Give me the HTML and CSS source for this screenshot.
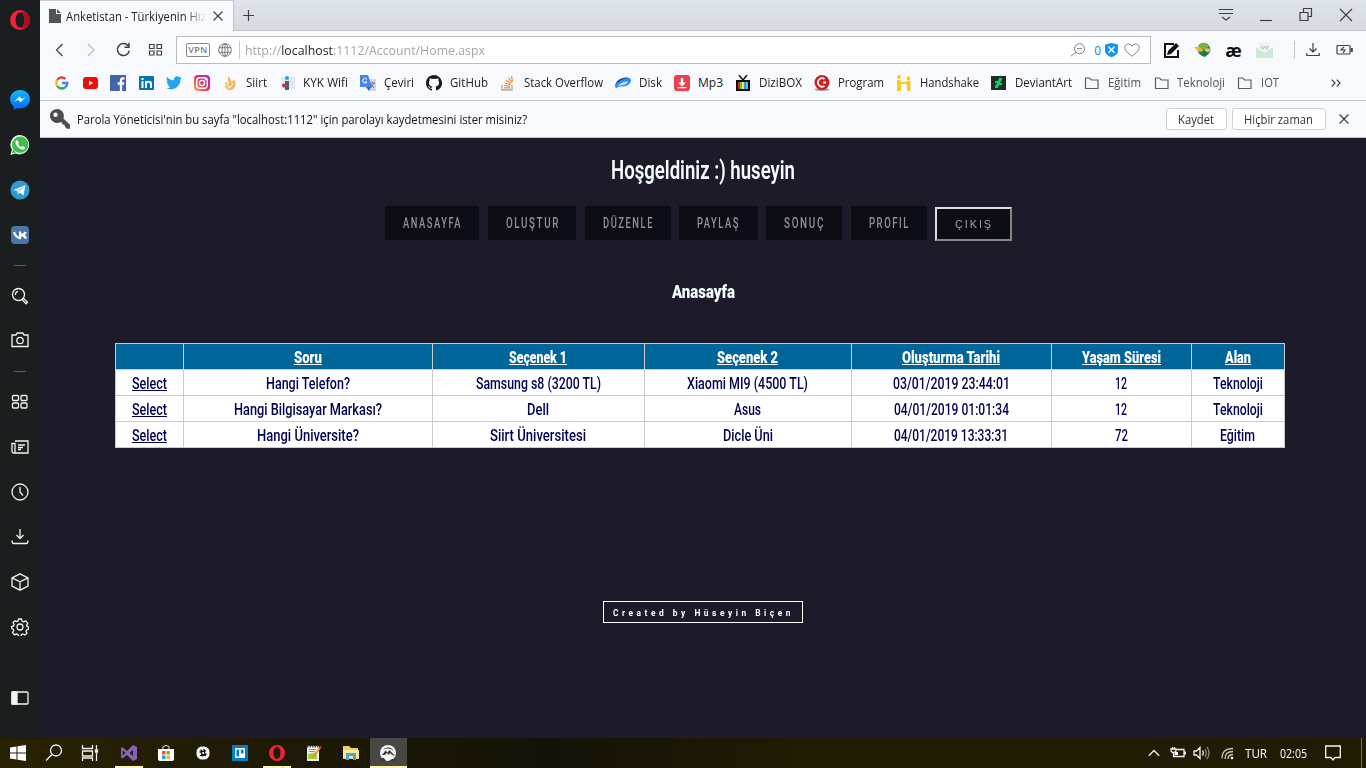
FILE: index.html
```html
<!DOCTYPE html>
<html lang="tr">
<head>
<meta charset="utf-8">
<title>Anketistan</title>
<link rel="stylesheet" href="styles.css">
</head>
<body>
<div class="desktop">
<div class="browser">
  <aside class="sidebar">
    <div class="side opera"><svg width="20" height="20" viewBox="0 0 20 20"><path fill="#f5203a" fill-rule="evenodd" d="M10 0a10 10 0 1 0 0 20a10 10 0 0 0 0-20zM10 2.600c2.600 0 4.400 3.200 4.400 7.400s-1.800 7.400-4.400 7.400s-4.400-3.200-4.400-7.400s1.800-7.400 4.400-7.400z"/><path fill="#a80f20" d="M10 2.600c2.200-1.300 4.300-1.100 6 .2c2.600 2 4 4.500 4 7.200s-1.400 5.500-4 7.200c-1.700 1.300-3.800 1.500-6 .2c2.600 0 4.400-3.200 4.400-7.400s-1.800-7.400-4.400-7.400z"/></svg></div>
    <div class="side"><svg width="20" height="20" viewBox="0 0 20 20"><defs><linearGradient id="msg" x2="0" y2="1"><stop stop-color="#17b6ff"/><stop offset="1" stop-color="#0068f5"/></linearGradient></defs><path fill="url(#msg)" d="M10 0C4.400 0 0 4 0 9.200c0 3 1.500 5.500 3.700 7.100V20l3.500-2c.9.200 1.800.4 2.800.4c5.600 0 10-4 10-9.200S15.600 0 10 0z"/><path fill="#fff" d="M4 12l5.400-5.600l2.700 2.700L16 6.800l-5.300 5.500L8 9.800z"/></svg></div>
    <div class="side"><svg width="20" height="20" viewBox="0 0 20 20"><path fill="#eafbea" d="M10.200 0a9.700 9.700 0 0 0-8.300 14.800L.4 20l5.200-1.400A9.700 9.700 0 1 0 10.200 0z"/><circle cx="10.200" cy="9.800" r="8.200" fill="#3fbd4c"/><path fill="#3fbd4c" d="M2 18.400l1-4 3 3z"/><path fill="#fff" d="M7 5c-1 .2-1.800 1.500-1.400 3c.8 3.200 3.700 6 6.700 6.500c1.600.2 2.700-.7 2.800-2.300l-2.500-1.300l-1.200 1.300c-1.700-.7-2.800-1.800-3.500-3.400l1-1z"/></svg></div>
    <div class="side"><svg width="20" height="20" viewBox="0 0 20 20"><circle cx="10" cy="10" r="9.600" fill="#2f9bd0"/><path fill="#f5fbff" d="M3.500 10L15.500 5l-2 10.500l-3.700-2.700l-1.900 1.900l-.6-3.600z"/><path stroke="#9cc9e2" d="M7.300 11l6-4l-4.600 4.900l-.6 2.400" fill="none"/></svg></div>
    <div class="side"><svg width="18" height="18" viewBox="0 0 18 18"><rect width="18" height="18" rx="4" fill="#4a76a8"/><path fill="none" stroke="#fff" stroke-width="2.300" d="M3 6c1 3 3 6 6 6V5.500M14.800 6c-1 2-2.500 3-5 3c2.500 0 4 1 5.300 3.500"/></svg></div>
    <div class="divider first"></div>
    <div class="side short"><svg class="line" width="18" height="18" viewBox="0 0 18 18"><circle cx="7.500" cy="7.500" r="6"/><path d="M12 11l4.500 4.200l-1.500 1.600L10.800 12.400M4.500 8a3 3 0 0 1 2.500-3.500"/></svg></div>
    <div class="side short"><svg class="line" width="18" height="18" viewBox="0 0 18 18"><path d="M1 4h4l1.200-2h5.600L13 4h4v11.500H1z"/><circle cx="9" cy="9.500" r="3.200"/></svg></div>
    <div class="divider second"></div>
    <div class="side"><svg class="line" width="18" height="18" viewBox="0 0 18 18"><rect x="1.500" y="2.500" width="6" height="5" rx="1"/><rect x="10" y="2.500" width="6" height="5" rx="1"/><rect x="1.500" y="10" width="6" height="5" rx="1"/><rect x="10" y="10" width="6" height="5" rx="1"/></svg></div>
    <div class="side"><svg class="line" width="18" height="18" viewBox="0 0 18 18"><path d="M4 3h13v12H3q-2 0-2-2V5.500h3V15M7 7h7M7 9.500h5M7 11.500h3"/></svg></div>
    <div class="side"><svg class="line" width="18" height="18" viewBox="0 0 18 18"><circle cx="9" cy="9" r="8"/><path d="M9 4v5l3 3.500"/></svg></div>
    <div class="side"><svg class="line" width="18" height="18" viewBox="0 0 18 18"><path d="M9 1v9M5.500 7L9 10.500L12.500 7M1 12.500q0 3 2 3h12q2 0 2-3"/></svg></div>
    <div class="side"><svg class="line" width="18" height="18" viewBox="0 0 18 18"><path d="M9 .8l8 4v8.400l-8 4l-8-4V4.800zM1 4.800l8 4l8-4M9 8.800v8.400"/></svg></div>
    <div class="side"><svg class="line" width="18" height="18" viewBox="0 0 18 18"><path stroke-linejoin="round" d="M7.500 1h3l.6 2.200l1.700.8l2-1.200l2 2.500l-1.200 1.900l.4 1.300l1.500.7v2l-2 .8l-.5 1.300l1 2l-2.200 1.700l-2-1l-1.300.6l-.5 1.700h-2.500l-.7-1.900l-1.300-.6l-2 1l-2-2.200l1.200-2l-.5-1.300l-1.500-.8V8.400L2.600 8l.5-1.500L2 4.500l2-1.900l2 1.100l1-.5z"/><circle cx="9" cy="9" r="3"/></svg></div>
    <div class="side last"><svg class="line" width="18" height="14" viewBox="0 0 18 14"><rect x="1" y="1" width="16" height="12" rx="1"/><path fill="#f3f3f3" d="M1 1h5v12H1z"/></svg></div>
  </aside>

  <main class="window">
    <div class="tabs">
      <div class="tab">
        <svg width="13" height="14" viewBox="0 0 13 14"><path fill="#505357" d="M0 0h7v5h5v9H0zM8 0l4 4H8z"/></svg>
        <span class="fit tab-title" data-w="140">Anketistan - Türkiyenin Hız</span>
        <svg class="ink tab-close" width="10" height="10" viewBox="0 0 10 10"><path d="M.5.5l9 9M9.500.5l-9 9"/></svg>
      </div>
      <svg class="ink plus" width="11" height="11" viewBox="0 0 11 11"><path d="M5.500 0v11M0 5.500h11"/></svg>
      <div class="controls">
        <svg class="ink" width="40" height="16" viewBox="0 0 40 16"><path d="M13 2.500h14M13 6.500h14M16 10l4 3l4-3"/></svg>
        <svg class="ink" width="40" height="16" viewBox="0 0 40 16"><path d="M14 13.500h12"/></svg>
        <svg class="ink" width="40" height="16" viewBox="0 0 40 16"><path d="M14 5.500h8v8h-8zM17.500 5V1.500h8v8H22"/></svg>
        <svg class="ink" width="40" height="16" viewBox="0 0 40 16"><path d="M14 2l12 12M26 2l-12 12"/></svg>
      </div>
    </div>

    <div class="toolbar">
      <svg class="ink nav-icon" width="32" height="20" viewBox="0 0 32 20"><path d="M18.500 4l-6 6l6 6"/></svg>
      <svg class="ink nav-icon faded" width="32" height="20" viewBox="0 0 32 20"><path d="M12 4l6 6l-6 6"/></svg>
      <svg class="ink nav-icon thick" width="32" height="20" viewBox="0 0 32 20"><path d="M20 5.700a6 6 0 1 0 1.300 5M21 2.700v4.500h-4.500"/></svg>
      <svg class="ink nav-icon" width="32" height="20" viewBox="0 0 32 20"><path d="M9.500 4.500h4.500v4H9.500zM17 4.500h4.500v4H17zM9.500 11h4.500v4H9.500zM17 11h4.500v4H17z"/></svg>
      <div class="address">
        <span class="vpn">VPN</span>
        <svg class="soft" width="14" height="14" viewBox="0 0 14 14"><circle cx="7" cy="7" r="6.300"/><ellipse cx="7" cy="7" rx="3" ry="6.300"/><path d="M1 4.700h12M1 9.300h12M7 1v12"/></svg>
        <span class="bar"></span>
        <span class="fit url" data-w="240">http://<b>localhost</b>:1112/Account/Home.aspx</span>
        <span class="grow"></span>
        <svg class="soft glass" width="16" height="14" viewBox="0 0 16 14"><circle cx="9.500" cy="5.700" r="5"/><path d="M6 9.200l-5 4M7 5.700h5"/></svg>
        <span class="count">0</span>
        <svg width="13" height="14" viewBox="0 0 13 14"><path fill="#1496ef" d="M0 1.500L6.500 0L13 1.500V8c0 3-3 5-6.500 6.200C3 13 0 11 0 8z"/><path stroke="#fff" stroke-width="1.500" d="M3.500 3.800l6 6M9.500 3.800l-6 6"/></svg>
        <svg class="soft heart" width="16" height="14" viewBox="0 0 16 14"><path d="M8 13.300C4 10 .8 7.500.8 4.500C.8 1 5.500-.5 8 3.200C10.500-.5 15.200 1 15.200 4.500C15.200 7.500 12 10 8 13.300z"/></svg>
      </div>
      <div class="extensions">
        <svg width="31" height="18" viewBox="0 0 31 18"><path fill="none" stroke="#111" stroke-width="2" d="M18 3H9v13h13V9"/><path fill="#111" d="M11 14l1-4l8-8l3 3l-8 8z"/></svg>
        <svg width="31" height="18" viewBox="0 0 31 18"><circle cx="17" cy="8.500" r="6.500" fill="#2b7fb8"/><path fill="#79b43a" d="M11 5c3-5 10-4 11 1l-4 1l-2 3l-4-1z"/><path fill="#e8b928" d="M7 6l6 0l3 4l-1 2l-4-2z"/><path fill="#f0c63a" d="M18 7l6 1l-3 4l-3-2z"/><path fill="#287d36" d="M12 11l6-1l4 2l-4 4l-3-1z"/></svg>
        <span class="ae">æ</span>
        <svg width="31" height="18" viewBox="0 0 31 18"><path fill="#cce9da" d="M7 6l8 6l9-6v11H7z"/><path fill="#e9f0ee" d="M10 2h11v6l-6 4l-5-4z"/><path fill="none" stroke="#a7c6bd" d="M12 5l2 3l2-3l2 3l1-3"/></svg>
      </div>
      <span class="bar outer"></span>
      <svg class="ink dl" width="14" height="14" viewBox="0 0 14 14"><path d="M7 0v9M3.500 5.500L7 9l3.500-3.500M.8 10v2.500h12.400V10"/></svg>
      <svg class="ink" width="18" height="12" viewBox="0 0 18 12"><rect x="1" y="1.500" width="13" height="8.500" rx="1"/><path d="M8 3L5 6h4L7 9"/><path stroke-width="2" d="M15.800 4v4"/></svg>
    </div>

    <div class="bookmarks">
      <span class="site"><svg width="14" height="14" viewBox="0 0 14 14" fill="none" stroke-width="2.400"><path stroke="#ea4335" d="M2.200 4A5.300 5.300 0 0 1 10.500 3"/><path stroke="#fbbc05" d="M2.300 4a5.500 5.500 0 0 0 0 6"/><path stroke="#34a853" d="M2.300 10a5.300 5.300 0 0 0 7.700 1.500"/><path stroke="#4285f4" d="M7 7h5.300c0 2-.8 3.500-2.300 4.500"/></svg></span>
      <span class="site"><svg width="15" height="12" viewBox="0 0 15 12"><rect width="15" height="12" rx="3" fill="#f20d0d"/><path fill="#fff" d="M6 3.500l4 2.500l-4 2.500z"/></svg></span>
      <span class="site"><svg width="16" height="16" viewBox="0 0 16 16"><path fill="#4264aa" d="M0 0h16v16H0z"/><path fill="none" stroke="#fff" stroke-width="2.300" d="M14.500 3.300H13q-2 0-2 2V16M7.700 8.500h6.500"/></svg></span>
      <span class="site"><svg width="15" height="14" viewBox="0 0 15 14"><rect width="15" height="14" rx="1" fill="#0873b1"/><path fill="none" stroke="#fff" stroke-width="2" d="M3.500 5v7M3.500 2v2M7 12V5M7 8c0-3 5-3 5 0v4"/></svg></span>
      <span class="site"><svg width="16" height="14" viewBox="0 0 16 14"><path fill="#26a6e7" d="M16 1.700l-1.600 1.700C14.500 10 9 15.500 0 12.300c2 0 3.500-.5 4.500-1.300C3 10.900 2 10 1.700 8.800h1.400C1.500 8.200.7 7 .7 5.400l1.400.4C.6 4.500.2 2.800 1.200.9C3 3 5.100 4.100 7.800 4.300C7.400.3 11.500-.9 13.500 1.600l2-.8l-1.200 1.600z"/></svg></span>
      <span class="site"><svg width="16" height="16" viewBox="0 0 16 16"><defs><linearGradient id="ig" x1="0" y1="1" x2="1" y2="0"><stop stop-color="#ffb04a"/><stop offset=".5" stop-color="#e82e62"/><stop offset="1" stop-color="#9033c4"/></linearGradient></defs><rect width="16" height="16" rx="4" fill="url(#ig)"/><rect x="2.700" y="2.700" width="10.600" height="10.600" rx="3" fill="none" stroke="#fff" stroke-width="1.400"/><circle cx="8" cy="8" r="2.600" fill="none" stroke="#fff" stroke-width="1.400"/><circle cx="11.300" cy="4.700" r=".8" fill="#fff"/></svg></span>
      <span class="mark first"><svg width="16" height="16" viewBox="0 0 16 16"><path fill="#f5b64c" d="M6 1c2 3 4 4 3 7l3-3c2 2 2 5 0 8c-3 4-9 2-9-3c0-2 1-3 1-4c1 1 1 3 2 4c2-2-1-5 0-9z"/><path fill="none" stroke="#fff" d="M4 9c1 4 5 4 7-1M6 13c2 0 4-2 5-4"/></svg><span class="fit" data-w="21">Siirt</span></span>
      <span class="mark"><svg width="16" height="16" viewBox="0 0 16 16"><path fill="#e2e8ee" d="M2 2h14v12H2z"/><circle cx="8" cy="3" r="2" fill="#24a4d3"/><path fill="#4a6078" d="M6 6h4v9H6z"/><circle cx="5" cy="10.500" r="2" fill="#dc2939"/></svg><span class="fit" data-w="45">KYK Wifi</span></span>
      <span class="mark"><svg width="16" height="16" viewBox="0 0 16 16"><path fill="#d4d8de" d="M6 4h10v12H9z"/><path fill="#4887ec" d="M0 0h8l4 12H0z"/><path fill="#2f63c0" d="M6 12h5l-2 4z"/><path fill="none" stroke="#fff" d="M7 4.500A2.300 2.300 0 1 0 7 7H5"/><path stroke="#747c88" d="M10 8h5M12.500 7v1M14 8l-3 5M11 9l3 4" fill="none"/></svg><span class="fit" data-w="30">Çeviri</span></span>
      <span class="mark"><svg width="16" height="16" viewBox="0 0 16 16"><path fill="#17181a" d="M8 0C3.600 0 0 3.600 0 8c0 3.500 2.300 6.500 5.500 7.600c.4.100.5-.2.500-.4v-1.500c-2.200.5-2.700-.9-2.700-.9c-.4-.9-.9-1.200-.9-1.200c-.7-.5.1-.5.100-.5c.8.100 1.200.8 1.200.8c.7 1.200 1.900.9 2.300.7c.1-.5.300-.9.500-1.100c-1.800-.2-3.600-.9-3.600-4c0-.9.300-1.600.8-2.100c-.1-.2-.4-1 .1-2.100c0 0 .7-.2 2.200.8a7.600 7.600 0 0 1 4 0c1.500-1 2.200-.8 2.200-.8c.4 1.100.2 1.900.1 2.100c.5.600.8 1.300.8 2.100c0 3.100-1.900 3.800-3.700 4c.3.200.6.700.6 1.500v2.200c0 .2.100.5.500.4A8 8 0 0 0 8 0z"/></svg><span class="fit" data-w="38">GitHub</span></span>
      <span class="mark"><svg width="16" height="16" viewBox="0 0 16 16" fill="none"><path stroke="#a7a9ab" stroke-width="1.300" d="M2 10v5h10v-5"/><path stroke="#f08b32" stroke-width="1.200" d="M4 12.800h6M4 10.500l6 .6M4.500 7.800l5.700 1.900M6 5l5 3.500M8.500 2.500l3.500 5M11.500 1l1 5.500"/></svg><span class="fit" data-w="79">Stack Overflow</span></span>
      <span class="mark"><svg width="16" height="16" viewBox="0 0 16 16"><path fill="#2b8df2" d="M0 11C0 6 6 3 12 2.500c4 0 5 3 3 5.500c-2 3-6 3.500-9 3.500c-3 0-4 1-5 2z"/><path fill="#173f88" d="M1 8C4 3 9 2 14 3c-4 0-8 1-10 4z"/><path fill="#bfe2ff" d="M3 11.500c1-3 5-5 10-5c-1 3-5 4-8 4z"/></svg><span class="fit" data-w="23">Disk</span></span>
      <span class="mark"><svg width="16" height="16" viewBox="0 0 16 16"><rect width="16" height="16" rx="3" fill="#ee3f4d"/><path fill="#fff" d="M6.800 3h2.400v4.500H12l-4 4l-4-4h2.800zM3.500 12h9v1.300h-9z"/></svg><span class="fit" data-w="25">Mp3</span></span>
      <span class="mark"><svg width="16" height="16" viewBox="0 0 16 16"><path fill="none" stroke="#111" stroke-width="1.500" d="M4 0l4 5l4-5"/><path fill="#0a0a0a" d="M1 5h14v11H1z"/><path fill="#ed1e34" d="M3 7h2v7H3z"/><path fill="#45d440" d="M5 7h2v7H5z"/><path fill="#ffe928" d="M7 7h2v7H7z"/><path fill="#3f8df5" d="M9 7h2v7H9z"/><path fill="#2ed8da" d="M11 7h2v7h-2z"/></svg><span class="fit" data-w="43">DiziBOX</span></span>
      <span class="mark"><svg width="16" height="16" viewBox="0 0 16 16"><ellipse cx="8" cy="14.500" rx="7.500" ry="1.500" fill="#999"/><circle cx="8" cy="7.500" r="7.500" fill="#cb1e25"/><path fill="none" stroke="#fff" stroke-width="1.700" d="M10.500 4a4.200 4.200 0 1 0 0 7"/><path fill="#fff" d="M9 6.500h3v2H9z"/></svg><span class="fit" data-w="46">Program</span></span>
      <span class="mark"><svg width="16" height="16" viewBox="0 0 16 16"><g fill="#f4cb20"><circle cx="3" cy="2" r="2"/><circle cx="12.500" cy="3.500" r="1.900"/><path d="M1 5h3l2 2h4l1-1h3.500v10H11V9H5v7H1z"/></g></svg><span class="fit" data-w="59">Handshake</span></span>
      <span class="mark"><svg width="16" height="16" viewBox="0 0 16 16"><path fill="#242a28" d="M0 1h15v14H0z"/><path fill="#0ad463" d="M8 3h3v2L9 8h2v2H8l-1 3H4v-2l2-3H4V6h3z"/></svg><span class="fit" data-w="57">DeviantArt</span></span>
      <span class="mark folder"><svg width="16" height="16" viewBox="0 0 16 16"><path d="M1.500 3h4l2 2h6.500v8.500H1.500z"/></svg><span class="fit" data-w="33">Eğitim</span></span>
      <span class="mark folder"><svg width="16" height="16" viewBox="0 0 16 16"><path d="M2.500 3h4l2 2H15v8.500H2.500z"/></svg><span class="fit" data-w="48">Teknoloji</span></span>
      <span class="mark folder"><svg width="16" height="16" viewBox="0 0 16 16"><path d="M1.500 3h4l2 2h6.500v8.500H1.500z"/></svg><span class="fit" data-w="18">IOT</span></span>
      <svg class="ink more" width="10" height="8" viewBox="0 0 10 8"><path d="M.8.700L4 4L.8 7.300M5.800.700L9 4L5.800 7.300"/></svg>
    </div>

    <div class="infobar">
      <svg width="20" height="20" viewBox="0 0 20 20"><path fill="#4b4c4e" fill-rule="evenodd" d="M7 0a7 7 0 1 0 3 13.300l2 .2l.5 2l2 .2l.5 2l2 2H20v-4L13.400 9.500A7 7 0 0 0 7 0zm-1.500 3.500a2.200 2.200 0 1 1 0 4.400a2.200 2.200 0 0 1 0-4.400z"/></svg>
      <span class="fit message" data-w="450">Parola Yöneticisi'nin bu sayfa "localhost:1112" için parolayı kaydetmesini ister misiniz?</span>
      <span class="grow"></span>
      <span class="choice save"><span class="fit" data-w="36">Kaydet</span></span>
      <span class="choice never"><span class="fit" data-w="69">Hiçbir zaman</span></span>
      <svg class="ink" width="10" height="10" viewBox="0 0 10 10"><path d="M.5.500l9 9M9.500.500l-9 9"/></svg>
    </div>

    <div class="page">
      <h1><span class="fit" data-w="184">Hoşgeldiniz :) huseyin</span></h1>
      <nav class="menu">
        <a class="item w94"><span class="fit" data-w="59">ANASAYFA</span></a>
        <a class="item w88"><span class="fit" data-w="54">OLUŞTUR</span></a>
        <a class="item w86"><span class="fit" data-w="51">DÜZENLE</span></a>
        <a class="item w79"><span class="fit" data-w="43">PAYLAŞ</span></a>
        <a class="item w76"><span class="fit" data-w="41">SONUÇ</span></a>
        <a class="item w76"><span class="fit" data-w="41">PROFIL</span></a>
        <button class="exit"><span class="fit" data-w="38">ÇIKIŞ</span></button>
      </nav>
      <h2><span class="fit" data-w="63">Anasayfa</span></h2>
      <table class="grid">
        <colgroup><col class="c1"><col class="c2"><col class="c3"><col class="c4"><col class="c5"><col class="c6"><col class="c7"></colgroup>
        <tr><th></th><th><a class="fit" data-w="28">Soru</a></th><th><a class="fit" data-w="58">Seçenek 1</a></th><th><a class="fit" data-w="61">Seçenek 2</a></th><th><a class="fit" data-w="98">Oluşturma Tarihi</a></th><th><a class="fit" data-w="79">Yaşam Süresi</a></th><th><a class="fit" data-w="26">Alan</a></th></tr>
        <tr><td><a class="fit" data-w="35">Select</a></td><td><span class="fit" data-w="84">Hangi Telefon?</span></td><td><span class="fit" data-w="125">Samsung s8 (3200 TL)</span></td><td><span class="fit" data-w="121">Xiaomi MI9 (4500 TL)</span></td><td><span class="fit" data-w="117">03/01/2019 23:44:01</span></td><td><span class="fit" data-w="12">12</span></td><td><span class="fit" data-w="50">Teknoloji</span></td></tr>
        <tr><td><a class="fit" data-w="35">Select</a></td><td><span class="fit" data-w="148">Hangi Bilgisayar Markası?</span></td><td><span class="fit" data-w="22">Dell</span></td><td><span class="fit" data-w="27">Asus</span></td><td><span class="fit" data-w="115">04/01/2019 01:01:34</span></td><td><span class="fit" data-w="12">12</span></td><td><span class="fit" data-w="50">Teknoloji</span></td></tr>
        <tr><td><a class="fit" data-w="35">Select</a></td><td><span class="fit" data-w="102">Hangi Üniversite?</span></td><td><span class="fit" data-w="96">Siirt Üniversitesi</span></td><td><span class="fit" data-w="50">Dicle Üni</span></td><td><span class="fit" data-w="114">04/01/2019 13:33:31</span></td><td><span class="fit" data-w="13">72</span></td><td><span class="fit" data-w="35">Eğitim</span></td></tr>
      </table>
      <footer class="credit"><span class="fit" data-w="181">Created by Hüseyin Biçen</span></footer>
    </div>
  </main>
</div>

<div class="taskbar">
  <span class="task"><svg width="16" height="16" viewBox="0 0 16 16"><path fill="#fff" d="M0 2.500L6.500 1.500v6H0zM7.500 1.300L16 0v7.500H7.500zM0 8.500h6.500v6L0 13.500zM7.500 8.500H16V16l-8.500-1.300z"/></svg></span>
  <span class="task"><svg class="line" width="18" height="18" viewBox="0 0 18 18"><circle cx="11" cy="6.500" r="5.500"/><path d="M7 10.500l-6 6"/></svg></span>
  <span class="task third"><svg class="line" width="18" height="16" viewBox="0 0 18 16"><path d="M1.500 0v3.500h10V0M1.500 6h10v5h-10zM1.500 16v-3h10v3M15.500 0v4M15.500 8v8"/><path fill="#fff" d="M14.500 5h2v2h-2z"/></svg></span>
  <span class="task wide open"><svg width="18" height="18" viewBox="0 0 18 18"><path fill="#8662be" fill-rule="evenodd" d="M13 1l4 2v12l-4 2l-6-6l-4.500 3.500L1 14V4l1.500-.7L7 7zM13 6L9.500 9l3.500 3zM2.700 6.500v5L5.500 9z"/></svg></span>
  <span class="task wide"><svg width="16" height="16" viewBox="0 0 16 16"><path fill="none" stroke="#ddd" d="M5 4V1.500Q8-.7 11 1.500V4"/><path fill="#fff" d="M0 4h16v10q0 2-2 2H2q-2 0-2-2z"/><path fill="#f05428" d="M4 6h3.500v3.500H4z"/><path fill="#79b829" d="M8.500 6H12v3.500H8.500z"/><path fill="#1aa4e8" d="M4 10.500h3.500V14H4z"/><path fill="#fcb725" d="M8.500 10.500H12V14H8.500z"/></svg></span>
  <span class="task wide"><svg width="14" height="14" viewBox="0 0 14 14"><rect x=".5" y=".5" width="13" height="13" rx="5.500" fill="#f4f4f4"/><path stroke="#161309" stroke-width="1.300" d="M5 3.500l1.300 7M8 3l1.300 7M3.500 6l6.500-1.300M4 9.300l6.500-1.300" fill="none"/></svg></span>
  <span class="task wide"><svg width="16" height="16" viewBox="0 0 16 16"><path fill="#087cc1" d="M0 0h16v16H0z"/><rect x="3" y="3" width="10" height="10" rx="1" fill="#fff"/><path fill="#087cc1" d="M4.500 4.500h2.700v7H4.500zM8.800 4.500h2.700v4H8.800z"/></svg></span>
  <span class="task wide open"><svg width="16" height="16" viewBox="0 0 20 20"><path fill="#ee2434" fill-rule="evenodd" d="M10 0a10 10 0 1 0 0 20a10 10 0 0 0 0-20zM10 2.600c2.600 0 4.400 3.200 4.400 7.400s-1.800 7.400-4.400 7.400s-4.400-3.200-4.400-7.400s1.800-7.400 4.400-7.400z"/></svg></span>
  <span class="task wide"><svg width="16" height="16" viewBox="0 0 16 16"><path fill="#f1f1ec" d="M1 1h12v15H1z"/><path fill="#9bd048" d="M2 9l9-2v7H2z"/><path stroke="#555" stroke-dasharray="1.500 1" stroke-width="2" d="M1 1.500h12"/><path stroke="#777" stroke-width=".8" d="M3 4.500h7M3 6.500h6"/><path stroke="#e99a20" stroke-width="2" d="M6 13l8-10"/><path stroke="#d33" stroke-width="2" d="M13.500 3.500l1.500-2"/></svg></span>
  <span class="task wide"><svg width="16" height="16" viewBox="0 0 16 16"><path fill="#f2cf66" d="M0 1h6l2 2h7v3h1v8H0z"/><path fill="#fce799" d="M0 5h16v8H0z"/><path fill="#42acd9" d="M3 15V8h10v7h-3v-4H6v4z"/></svg></span>
  <span class="task wide open active"><svg width="16" height="16" viewBox="0 0 16 16"><circle cx="8" cy="8" r="8" fill="#f5f5f5"/><path fill="#3c3b39" d="M2 10l3.500-4.500l2 2l2-2.500l5.500 6l-3-1l-2-2l-1 2l-2-2l-2 2zM3 4.500a7 7 0 0 1 11 1.500c-4-3-7-3-11-1.500zM0 13h4l2 3H0zM9 16l3-2h4v2z"/></svg></span>
  <span class="grow"></span>
  <svg class="line chevron" width="12" height="8" viewBox="0 0 12 8"><path d="M.8 6.800L6 1.500l5.200 5.300"/></svg>
  <svg class="line battery" width="16" height="14" viewBox="0 0 16 14"><path d="M6 3.500h8v7H4V8M15.300 5.500v3M1 3h5v2L4.500 6.500h-2L1 5zM2.500 1v2M4.500 1v2M3.500 7v4"/><path fill="#fff" stroke="none" d="M5 6h3v3H5z"/></svg>
  <svg class="line volume" width="17" height="14" viewBox="0 0 17 14"><path d="M1 5h2.500L7 1.500v11L3.500 9H1zM9.500 4.500q1.500 2.500 0 5"/><path opacity=".5" d="M12 3q2.500 4 0 8M14 1q4 6 0 12"/></svg>
  <svg class="line wifi" width="13" height="14" viewBox="0 0 13 14"><path opacity=".8" d="M1 12.500Q1 2.500 12 2.500M4 13Q4 5.500 12 5.500M7 13Q7 8.500 12 8.500"/><circle cx="11" cy="12" r="1.300" fill="#fff" stroke="none"/></svg>
  <span class="fit tur" data-w="22">TUR</span>
  <span class="fit clock" data-w="27">02:05</span>
  <svg class="line notice" width="16" height="17" viewBox="0 0 16 17"><path d="M.7 1h14.600v11.500H10L8 15l-2-2.500H.7z"/></svg>
  <span class="peek"></span>
</div>
</div>
<script src="fit.js"></script>
</body>
</html>
```
FILE: styles.css
```css
* { box-sizing: border-box; }
body { margin: 0; font-family: "Open Sans", "Noto Sans", sans-serif; font-size: 12px; color: #222; }
svg { display: block; flex: none; }
.desktop { width: 1366px; height: 768px; display: flex; flex-direction: column; overflow: hidden; }
.browser { height: 738px; display: flex; }
.grow { flex: 1; }
.fit { display: inline-block; white-space: nowrap; flex: none; }
.fit-text { display: inline-block; transform-origin: 0 50%; text-decoration: inherit; }
.line { fill: none; stroke: #f3f3f3; stroke-width: 1.3; }
.ink { fill: none; stroke: #3c4045; stroke-width: 1.2; }
.thick { stroke-width: 1.5; }
.soft { fill: none; stroke: #777b7f; stroke-width: 1; }

.sidebar { width: 40px; background: #1a1e1e; display: flex; flex-direction: column; flex: none; }
.side { height: 45px; flex: none; display: flex; align-items: center; justify-content: center; padding-right: 1px; }
.side.opera { height: 40px; margin-bottom: 37px; }
.side.short { height: 44px; }
.side.last { margin-top: 26px; }
.divider { width: 12px; height: 1px; background: #5b6060; margin: 8px auto; flex: none; }
.divider.second { margin: 9px auto 7px; }

.window { flex: 1; display: flex; flex-direction: column; min-width: 0; }
.tabs { height: 31px; background: linear-gradient(#dfe4ec, #d5dae1); border-bottom: 1px solid #c1c5ca; display: flex; align-items: center; flex: none; }
.tab { width: 194px; height: 31px; align-self: flex-start; background: #f8f9fc; border-right: 1px solid #c1c5ca; border-top: 1px solid #c9cdd3; display: flex; align-items: center; padding-left: 9px; }
.tab-title { margin-left: 4px; color: #222; -webkit-mask-image: linear-gradient(90deg, #000 85%, transparent); mask-image: linear-gradient(90deg, #000 85%, transparent); }
.tab-close { margin-left: 7px; }
.plus { margin-left: 9px; }
.controls { margin-left: auto; display: flex; }

.toolbar { height: 38px; background: #f8f9fc; display: flex; align-items: center; padding-left: 4px; flex: none; }
.faded { stroke: #b9bcc0; }
.address { width: 975px; height: 28px; margin-left: 4px; background: #fff; border: 1px solid #b9bdc1; display: flex; align-items: center; padding: 0 10px 0 9px; }
.vpn { width: 24px; height: 14px; border: 1px solid #85898d; border-radius: 2px; font-size: 9px; line-height: 12px; text-align: center; letter-spacing: .5px; color: #777b7f; font-weight: 600; margin-right: 8px; }
.bar { width: 1px; height: 18px; background: #c7cacd; margin: 0 5px 0 7px; }
.url { font-size: 13px; color: #a2a5a9; }
.url b { font-weight: 400; color: #1d1d1d; }
.glass { margin-right: 1px; }
.count { color: #0b85dc; font-size: 12px; margin: 0 4px 0 7px; }
.heart { margin-left: 6px; }
.extensions { display: flex; align-items: center; margin-left: 5px; }
.ae { width: 31px; text-align: center; font: bold 18px/18px "Open Sans", sans-serif; color: #111; }
.bar.outer { margin: 0 11px 0 14px; }
.dl { margin-right: 16px; }

.bookmarks { height: 32px; background: #f8f9fc; border-bottom: 1px solid #c5c8cc; display: flex; align-items: center; padding: 0 25px 4px 8px; flex: none; }
.site { width: 28px; display: flex; justify-content: center; }
.mark { display: flex; align-items: center; gap: 8px; margin-right: 12px; }
.mark.first { margin-left: 6px; }
.folder { color: #50545a; }
.folder path { fill: none; stroke: #5b5f65; stroke-width: 1.2; }
.more { margin-left: auto; }

.infobar { height: 37px; background: #f8f9fc; border-bottom: 1px solid #c1c4c8; display: flex; align-items: center; padding: 0 17px 0 10px; flex: none; }
.message { margin-left: 7px; color: #111; }
.choice { height: 22px; background: #fff; border: 1px solid #cfd2d6; border-radius: 3px; display: flex; align-items: center; justify-content: center; color: #333; padding-right: 1px; }
.save { width: 61px; margin-right: 5px; }
.never { width: 94px; margin-right: 13px; }

.page { flex: 1; background: #1d1b2a; display: flex; flex-direction: column; align-items: center; font-family: Roboto, sans-serif; font-weight: 500; }
h1 { margin: 16px 1px 0 0; height: 34px; font-size: 26px; line-height: 33px; font-weight: 600; color: #f5ffff; }
.menu { display: flex; align-items: center; margin: 18px 9px 0 0; height: 34px; gap: 8.5px; }
.item { height: 34px; background: #0c0d14; color: #929292; font-size: 14px; line-height: 34px; letter-spacing: 2.3px; padding-left: 18px; font-weight: 500; }
.w94 { width: 94px; }
.w88 { width: 88.5px; }
.w86 { width: 86px; }
.w79 { width: 78.5px; }
.w76 { width: 76px; }
.exit { width: 77px; height: 34px; margin-top: 2px; padding: 0 0 0 18px; text-align: left; background: #0c0d14; border: 2px solid; border-color: #dedee4 #85858a #85858a #dedee4; font: 11px "Liberation Sans", sans-serif; letter-spacing: 2px; color: #a0a0a0; }
h2 { margin: 38px 0 0; height: 28px; font-size: 19px; line-height: 28px; font-weight: 900; color: #f5ffff; }
.grid { width: 1170px; margin: 37px 6px 0 0; border-collapse: collapse; table-layout: fixed; background: #fff; color: #000055; font-size: 16.500px; }
.grid th, .grid td { height: 26px; padding: 2px 1px 0 0; border: 1px solid #ccc; text-align: center; line-height: 20px; }
.grid td { font-weight: 500; }
.grid th { background: #006699; color: #fff; font-weight: 900; }
.grid a { text-decoration: underline; }
.c1 { width: 68px; }
.c2 { width: 249px; }
.c3 { width: 212px; }
.c4 { width: 207px; }
.c5 { width: 200px; }
.c6 { width: 140px; }
.c7 { width: 93px; }
.credit { width: 200px; height: 22px; margin-top: 153px; border: 1px solid #fff; color: #fff; font-size: 9.500px; line-height: 21px; letter-spacing: 4px; padding-left: 9px; font-weight: 700; }

.taskbar { height: 30px; background: linear-gradient(90deg, #292202 0, #211c06 200px, #191507 430px, #151208 550px, #211b03 800px, #201c04 1366px); display: flex; align-items: center; color: #fff; }
.task { width: 36px; height: 30px; display: flex; align-items: center; justify-content: center; flex: none; }
.third { margin-right: 2.500px; }
.wide { width: 37px; }
.open { background: linear-gradient(#fff5af, #fff5af) 50% 100% / 28px 2px no-repeat; }
.active { background: linear-gradient(#fff5af, #fff5af) 50% 100% / 37px 2px no-repeat #484744; }
.chevron { margin-right: 10px; }
.battery { margin-right: 7px; }
.volume { margin-right: 11px; }
.wifi { margin-right: 11px; }
.tur { margin-right: 13px; }
.clock { margin-right: 18px; }
.notice { margin-right: 20px; }
.peek { width: 1px; height: 30px; background: #77735f; margin-right: 4px; }
```
FILE: fit.js
```js
// Condenses each label horizontally to the width given in data-w.
document.querySelectorAll('.fit').forEach(function (label) {
  var inner = document.createElement('span');
  inner.className = 'fit-text';
  while (label.firstChild) inner.appendChild(label.firstChild);
  label.appendChild(inner);
  var natural = inner.getBoundingClientRect().width;
  var target = Number(label.dataset.w);
  label.style.width = target + 'px';
  inner.style.transform = 'scaleX(' + target / natural + ')';
});
```
